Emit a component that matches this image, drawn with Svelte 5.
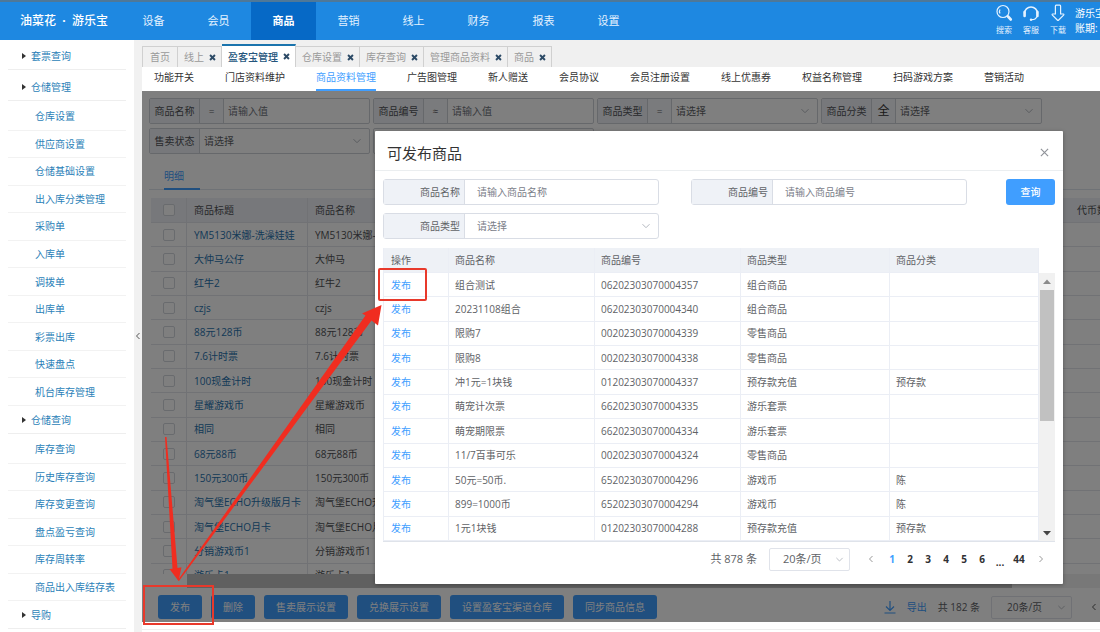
<script>
  const nav = ['设备', '会员', '商品', '营销', '线上', '财务', '报表', '设置'];
  const menu = [
    { name: '套票查询', items: [] },
    {
      name: '仓储管理',
      items: ['仓库设置', '供应商设置', '仓储基础设置', '出入库分类管理', '采购单', '入库单', '调拨单', '出库单', '彩票出库', '快速盘点', '机台库存管理']
    },
    {
      name: '仓储查询',
      items: ['库存查询', '历史库存查询', '库存变更查询', '盘点盈亏查询', '库存周转率', '商品出入库结存表']
    },
    { name: '导购', items: [] }
  ];
  const tabs = ['首页', '线上', '盈客宝管理', '仓库设置', '库存查询', '管理商品资料', '商品'];
  const subnav = ['功能开关', '门店资料维护', '商品资料管理', '广告图管理', '新人赠送', '会员协议', '会员注册设置', '线上优惠券', '权益名称管理', '扫码游戏方案', '营销活动'];
  const filters = [
    { label: '商品名称', op: '=', kind: 'input' },
    { label: '商品编号', op: '≈', kind: 'input' },
    { label: '商品类型', op: '=', kind: 'select' },
    { label: '商品分类', op: '全', kind: 'select' }
  ];
  const goods = [
    ['YM5130米娜-洗澡娃娃', 'YM5130米娜-洗澡娃娃'],
    ['大仲马公仔', '大仲马'],
    ['红牛2', '红牛2'],
    ['czjs', 'czjs'],
    ['88元128币', '88元128币'],
    ['7.6计时票', '7.6计时票'],
    ['100现金计时', '100现金计时'],
    ['星耀游戏币', '星耀游戏币'],
    ['相同', '相同'],
    ['68元88币', '68元88币'],
    ['150元300币', '150元300币'],
    ['淘气堡ECHO升级版月卡', '淘气堡ECHO升级版月卡'],
    ['淘气堡ECHO月卡', '淘气堡ECHO月卡'],
    ['分销游戏币1', '分销游戏币1'],
    ['游乐卡1', '游乐卡1']
  ];
  const actions = ['发布', '删除', '售卖展示设置', '兑换展示设置', '设置盈客宝渠道仓库', '同步商品信息'];
  const rows = [
    ['组合测试', '06202303070004357', '组合商品', ''],
    ['20231108组合', '06202303070004340', '组合商品', ''],
    ['限购7', '00202303070004339', '零售商品', ''],
    ['限购8', '00202303070004338', '零售商品', ''],
    ['冲1元=1块钱', '01202303070004337', '预存款充值', '预存款'],
    ['萌宠计次票', '66202303070004335', '游乐套票', ''],
    ['萌宠期限票', '66202303070004334', '游乐套票', ''],
    ['11/7百事可乐', '00202303070004324', '零售商品', ''],
    ['50元=50币.', '65202303070004296', '游戏币', '陈'],
    ['899=1000币', '65202303070004294', '游戏币', '陈'],
    ['1元1块钱', '01202303070004288', '预存款充值', '预存款']
  ];
  const pages = ['1', '2', '3', '4', '5', '6', '...', '44'];
</script>

{#snippet chevron()}
  <svg class="chev" viewBox="0 0 10 10" aria-hidden="true"><path d="M1.5 3.2 5 6.7 8.500 3.2" fill="none" stroke="currentColor" /></svg>
{/snippet}

<div class="page">
  <header>
    <div class="logo">油菜花<span>·</span>游乐宝</div>
    <nav class="topnav">
      {#each nav as n}<a href="#top" class:active={n === '商品'}>{n}</a>{/each}
    </nav>
    <div class="tools">
      <button>
        <svg viewBox="0 0 18 18"><circle cx="8" cy="7.500" r="6" /><path d="M5 5.500a4 4 0 0 0 0 4" /><path d="m13 12.500 2.800 3" stroke-width="2.600" stroke-linecap="round" /></svg>
        搜索
      </button>
      <button>
        <svg viewBox="0 0 18 18"><path d="M2.500 9.500a6.500 6.500 0 0 1 13 0" stroke-width="1.500" /><path d="M2.600 8v4M15.400 8v4" stroke-width="2.600" stroke-linecap="round" /><path d="M15 12.500c-1 2.200-2.800 3.200-5 3.200" /><circle cx="9" cy="15.700" r="1.200" fill="#e4f2ff" stroke="none" /></svg>
        客服
      </button>
      <button>
        <svg viewBox="0 0 18 18"><path d="M7.200 1.200h3.600a1 1 0 0 1 .8 1V10h2.700q1 .2.300 1.100L9.700 16q-.7.700-1.400 0L3.400 11.100Q2.700 10.200 3.700 10h2.700V2.200a1 1 0 0 1 .8-1Z" /></svg>
        下载
      </button>
      <div class="user"><span>游乐宝</span><span>账期:</span></div>
    </div>
  </header>

  <div class="body">
    <aside>
      {#each menu as g}
        <a class="group" class:leaf={!g.items.length} href="#menu"><i></i>{g.name}</a>
        {#if g.items.length}
          <ul style="height:{Math.round(g.items.length * 27.5)}px">
            {#each g.items as item}<li><a href="#menu">{item}</a></li>{/each}
          </ul>
        {/if}
      {/each}
    </aside>
    <button class="fold" aria-label="收起">
      <svg viewBox="0 0 6 8"><path d="M4.500 1 1.500 4l3 3" fill="none" stroke="#555" /></svg>
    </button>

    <main>
      <div class="tabs">
        {#each tabs as t, i}
          <div class="tab" class:active={i === 2}>
            <a href="#tab">{t}</a>
            {#if i > 0}
              <button aria-label="关闭"><svg viewBox="0 0 8 8"><path d="m1.200 1.200 5.600 5.600m0-5.600L1.200 6.800" stroke="#2c4a66" stroke-width="2.200" /></svg></button>
            {/if}
          </div>
        {/each}
      </div>
      <nav class="subnav">
        {#each subnav as s, i}<a href="#sub" class:active={i === 2}>{s}</a>{/each}
      </nav>

      <section class="frame">
        <div class="filters">
          {#each filters as f, i}
            <div class="field">
              <label for="f{i}">{f.label}</label><b class:big={f.op === '全'}>{f.op}</b>
              {#if f.kind === 'input'}
                <input id="f{i}" placeholder="请输入值" />
              {:else}
                <select id="f{i}"><option>请选择</option></select>{@render chevron()}
              {/if}
            </div>
          {/each}
          <div class="field">
            <label for="f4">售卖状态</label>
            <select id="f4"><option>请选择</option></select>{@render chevron()}
          </div>
          <div class="field"></div>
        </div>

        <div class="detail"><a href="#detail">明细</a></div>

        <div class="grid">
          <table>
            <colgroup><col class="c-check" /><col class="c-title" /><col /><col class="c-coin" /></colgroup>
            <thead>
              <tr><th><input type="checkbox" aria-label="全选" /></th><th>商品标题</th><th>商品名称</th><th>代币数</th></tr>
            </thead>
            <tbody>
              {#each goods as g}
                <tr><td><input type="checkbox" aria-label={g[0]} /></td><td><a href="#goods">{g[0]}</a></td><td>{g[1]}</td><td></td></tr>
              {/each}
            </tbody>
          </table>
        </div>
        <div class="hscroll"><div></div></div>

        <div class="actions">
          {#each actions as a}<button>{a}</button>{/each}
          <div class="export">
            <svg viewBox="0 0 12 14"><path d="M6 1v9M2 6.500l4 4 4-4M.5 13h11" fill="none" stroke="#409eff" stroke-width="1.200" /></svg>
            <a href="#export">导出</a>
            <span>共 182 条</span>
            <div class="pagesize"><select aria-label="每页条数"><option>20条/页</option></select>{@render chevron()}</div>
            <svg class="prev" viewBox="0 0 6 8"><path d="M4.500 1 1.500 4l3 3" fill="none" stroke="#555" /></svg>
          </div>
        </div>

        <div class="mask"></div>

        <div class="modal" role="dialog" aria-labelledby="dlg">
          <div class="mhead">
            <h2 id="dlg">可发布商品</h2>
            <button aria-label="关闭"><svg viewBox="0 0 10 10"><path d="m1 1 8 8m0-8L1 9" stroke="#909399" stroke-width="1.300" /></svg></button>
          </div>
          <div class="mform">
            <div class="mfield"><label for="m1">商品名称</label><input id="m1" placeholder="请输入商品名称" /></div>
            <div class="mfield"><label for="m2">商品编号</label><input id="m2" placeholder="请输入商品编号" /></div>
            <button class="query">查询</button>
            <div class="mfield"><label for="m3">商品类型</label><select id="m3"><option>请选择</option></select>{@render chevron()}</div>
          </div>
          <div class="mtable">
            <table>
              <colgroup><col class="w1" /><col class="w2" /><col class="w2" /><col class="w3" /><col class="w3" /></colgroup>
              <thead><tr><th>操作</th><th>商品名称</th><th>商品编号</th><th>商品类型</th><th>商品分类</th></tr></thead>
              <tbody>
                {#each rows as r}
                  <tr><td><a href="#publish">发布</a></td>{#each r as c}<td>{c}</td>{/each}</tr>
                {/each}
              </tbody>
            </table>
            <div class="vscroll">
              <svg viewBox="0 0 8 5"><path d="M0 5 4 .5 8 5Z" fill="#8a8a8a" /></svg>
              <div></div>
              <svg viewBox="0 0 8 5"><path d="M0 0 4 4.500 8 0Z" fill="#444" /></svg>
            </div>
          </div>
          <div class="pager">
            <span>共 878 条</span>
            <div class="pagesize"><select aria-label="每页数量"><option>20条/页</option></select>{@render chevron()}</div>
            <button class="arrow" aria-label="上一页"><svg viewBox="0 0 6 8"><path d="M4.500 1 1.500 4l3 3" fill="none" stroke="#999" /></svg></button>
            {#each pages as p}<button class:on={p === '1'} class:dots={p === '...'} class:wide={p === '44'}>{p}</button>{/each}
            <button class="arrow" aria-label="下一页"><svg viewBox="0 0 6 8"><path d="m1.500 1 3 3-3 3" fill="none" stroke="#999" /></svg></button>
          </div>
        </div>
      </section>
    </main>
  </div>

  <svg class="marks" width="1100" height="632" viewBox="0 0 1100 632" aria-hidden="true">
    <g fill="none" stroke="#e8392b" stroke-width="2">
      <rect x="144" y="586" width="69" height="38" />
      <rect x="379" y="269" width="47" height="31" rx="1" />
    </g>
    <g fill="#f02d20">
      <path d="M165 437h1.500L177.500 568l4-.8L178.500 581 169.500 569l3-.3Z" />
      <path d="M178 580 365.500 315.500 362 313.500 381.500 305 378 325.500 371.500 320.500 179 581Z" />
    </g>
  </svg>
</div>

<style>
  :global(body) { margin: 0; background: #fff; }
  .page {
    position: relative;
    overflow: hidden;
    font: 10px/14px "Open Sans", "Noto Sans CJK SC", sans-serif;
    color: #606266;
  }
  .page :is(input, select, button) { font: inherit; color: inherit; border: 0; background: none; padding: 0; margin: 0; box-sizing: border-box; border-radius: 0; outline: 0; }
  .page :is(select, input[type="checkbox"]) { appearance: none; }
  a { text-decoration: none; color: inherit; }
  svg { display: block; flex: none; }
  .chev { width: 10px; height: 10px; color: #b4b8bf; margin-right: 7px; }

  header { display: flex; align-items: stretch; height: 38px; border-top: 2px solid #4f7898; background: #1e88e1; color: #fff; }
  .logo { width: 101px; padding-left: 20px; font-size: 12px; line-height: 37px; font-weight: 500; white-space: nowrap; }
  .logo span { display: inline-block; width: 16px; text-align: center; font-weight: 700; }
  .topnav { display: flex; flex: 1; }
  .topnav a { width: 65px; text-align: center; font-size: 11px; line-height: 37px; color: #e4f2ff; }
  .topnav a.active { background: #0669c6; color: #fff; font-weight: 700; }
  .tools { display: flex; gap: 7px; padding-top: 2px; }
  .tools button { width: 20px; font-size: 8px; line-height: 10px; color: #e4f2ff; display: flex; flex-direction: column; align-items: center; gap: 3px; white-space: nowrap; }
  .tools svg { width: 18px; height: 18px; fill: none; stroke: #e4f2ff; stroke-width: 1.2; }
  .user { width: 25px; overflow: hidden; white-space: nowrap; display: flex; flex-direction: column; line-height: 15px; padding-top: 2px; }

  .body { display: flex; }
  aside { width: 126px; padding: 2px 0 0 8px; color: #2b7fb8; }
  .group { display: flex; align-items: center; gap: 5px; height: 27px; padding-left: 14px; border-bottom: 1px solid #eee; margin-right: 8px; }
  .group.leaf { margin-bottom: 3px; }
  .group i { border: 3px solid transparent; border-left: 4px solid #333; border-right: 0; }
  aside ul { margin: 2px 8px 0 0; padding: 0; list-style: none; display: grid; grid-auto-rows: 1fr; }
  aside li { display: flex; align-items: center; padding-left: 27px; border-bottom: 1px solid #f2f2f2; min-height: 0; }
  .fold { width: 8px; background: #f1f1f1 !important; display: flex; align-items: center; justify-content: center; }
  .fold svg { width: 6px; height: 8px; }

  main { flex: 1; min-width: 0; }
  .tabs { display: flex; align-items: flex-end; height: 27px; background: #f0f0f0; }
  .tab { display: flex; align-items: center; gap: 5px; height: 21px; box-sizing: border-box; padding: 0 5px 0 6px; border: 1px solid #d0d0d0; border-width: 1px 1px 0 0; color: #999; white-space: nowrap; }
  .tab:first-child { padding: 0 7px; border-left-width: 1px; }
  .tab.active { height: 23px; border-top: 2px solid #1a74ad; background: #fff; color: #24557c; font-weight: 500; }
  .tab svg { width: 7px; height: 7px; }
  .subnav { display: flex; gap: 31px; padding: 0 12px; height: 24px; line-height: 20px; color: #333; white-space: nowrap; background: #fff; }
  .subnav a.active { color: #409eff; border-bottom: 2px solid #409eff; height: 22px; }

  .frame { position: relative; border-bottom: 1px solid #eee; padding-bottom: 7px; }
  .filters { display: grid; grid-template-columns: repeat(4, 221px); gap: 4px 3px; padding: 7px 7px 0; }
  .field { display: flex; align-items: center; height: 26px; box-sizing: border-box; border: 1px solid #cdd0d6; border-radius: 2px; }
  .field label, .field b { align-self: stretch; line-height: 24px; box-sizing: border-box; text-align: center; border-right: 1px solid #cdd0d6; font-weight: 400; }
  .field label { width: 50px; background: #eef1f6; color: #505256; }
  .field b { width: 24px; background: #f5f7fa; }
  .field b.big { font-size: 12px; color: #333; }
  .field input, .field select { flex: 1; min-width: 0; height: 24px; padding: 0 4px; }
  .field ::placeholder { color: #70747c; opacity: 1; }

  .detail { margin: 13px 0 8px 7px; border-bottom: 1px solid #dfe4ed; padding: 0 15px; display: flex; }
  .detail a { width: 36px; height: 21px; line-height: 18px; color: #409eff; border-bottom: 2px solid #409eff; margin-bottom: -1px; }

  table { border-collapse: separate; border-spacing: 0; table-layout: fixed; width: 100%; }
  th, td { padding: 0 0 0 7px; text-align: left; font-weight: 400; white-space: nowrap; overflow: hidden; border: solid #ebeef5; border-width: 0 1px 1px 0; }
  th { height: 24px; background: #eef1f6; }
  .grid { height: 376px; overflow: hidden; margin-left: 9px; }
  .grid table { height: 390px; }
  .grid :is(th, td) { color: #505256; border-color: #e2e5ea; }
  .grid :is(th, td):first-child { padding: 0; }
  .grid :is(th, td):nth-child(n + 3) { border-right: 0; }
  .grid td a { color: #2772ae; }
  .grid input { display: block; width: 12px; height: 12px; margin: 0 auto; border: 1px solid #d3d6dc; border-radius: 2px; background: #fff; }
  .c-check { width: 36px; }
  .c-title { width: 121px; }
  .c-coin { width: 30px; }
  .hscroll { height: 14px; margin-left: 45px; background: #f1f1f1; padding-right: 88px; }
  .hscroll div { height: 14px; background: #c1c1c1; }

  .actions { display: flex; align-items: center; gap: 9px; padding: 7px 0 3px 16px; }
  .actions > button { height: 24px; padding: 0 12px; border-radius: 3px; background: #409eff; color: #fff; white-space: nowrap; }
  .export { margin-left: auto; display: flex; align-items: center; gap: 11px; padding-right: 3px; white-space: nowrap; }
  .export svg:first-child { width: 12px; height: 14px; }
  .export a { color: #409eff; }
  .export .prev { width: 6px; height: 8px; margin-left: 8px; }
  .pagesize { display: flex; align-items: center; width: 81px; height: 23px; box-sizing: border-box; border: 1px solid #e0e3ea; border-radius: 2px; font-size: 11px; }
  .pagesize select { flex: 1; min-width: 0; padding-left: 13px; }
  .export .pagesize select { font-size: 10px; padding-left: 15px; }
  .pagesize .chev { width: 9px; height: 9px; margin-right: 5px; }

  .mask { position: absolute; inset: 0 0 7px; background: rgba(0, 0, 0, 0.5); }

  .modal { position: absolute; top: 40px; left: 233px; right: 37px; background: #fff; border-radius: 1px; box-shadow: 0 1px 4px rgba(0, 0, 0, 0.3); }
  .mhead { display: flex; align-items: center; justify-content: space-between; height: 40px; padding: 4px 14px 0 12px; border-bottom: 1px solid #ebeef0; box-sizing: border-box; }
  .mhead h2 { margin: 0; font-size: 15px; line-height: 20px; font-weight: 400; color: #333; }
  .mhead svg { width: 9px; height: 9px; }
  .mform { display: grid; grid-template-columns: 276px 276px 1fr; column-gap: 32px; row-gap: 8px; padding: 8px; }
  .query { justify-self: end; width: 49px; height: 26px; border-radius: 3px !important; background: #409eff !important; color: #fff !important; font-weight: 500 !important; }
  .mfield { display: flex; align-items: center; height: 26px; box-sizing: border-box; border: 1px solid #d9dde5; border-radius: 3px; }
  .mfield label { width: 81px; box-sizing: border-box; line-height: 24px; padding-right: 4px; text-align: right; background: #eff2f7; border-right: 1px solid #d9dde5; }
  .mfield input, .mfield select { flex: 1; min-width: 0; height: 24px; padding: 0 12px; color: #7b8089; }
  .mfield ::placeholder { color: #7b8089; opacity: 1; }
  .mtable { display: flex; margin: 1px 8px 0; border-bottom: 1px solid #dfe3ea; }
  .mtable table { flex: 1; height: 293px; width: auto; border-left: 1px solid #ebeef5; box-sizing: border-box; }
  .mtable :is(th, td) { padding-left: 6px; }
  .mtable td a { color: #409eff; }
  .mtable :is(th, td):first-child { padding-left: 7px; }
  .w1 { width: 65px; }
  .w2 { width: 146px; }
  .w3 { width: 149px; }
  .vscroll { width: 16px; margin-top: 25px; background: #f1f1f1; display: flex; flex-direction: column; align-items: center; }
  .vscroll div { width: 14px; height: 131px; margin: 6px 0 auto; background: #c1c1c1; }
  .vscroll svg { width: 8px; height: 5px; margin: 6px 0 0; }
  .vscroll svg:last-child { margin: 0 0 5px; }
  .pager { display: flex; align-items: center; justify-content: flex-end; height: 34px; padding: 0 12px 8px; }
  .pager > span { font-size: 11px; margin-right: 12px; }
  .pager button { width: 18px; text-align: center; font-weight: 700; color: #303133; }
  .pager button.wide { width: 20px; }
  .pager button.on { color: #409eff; }
  .pager button.dots { padding-top: 6px; }
  .pager .arrow { display: flex; justify-content: center; width: 24px; }
  .pager .pagesize + .arrow { margin-left: 9px; }
  .pager .arrow:last-child { margin-right: -2px; }
  .pager .arrow svg { width: 6px; height: 8px; }

  .marks { position: absolute; top: 0; left: 0; pointer-events: none; }
</style>
